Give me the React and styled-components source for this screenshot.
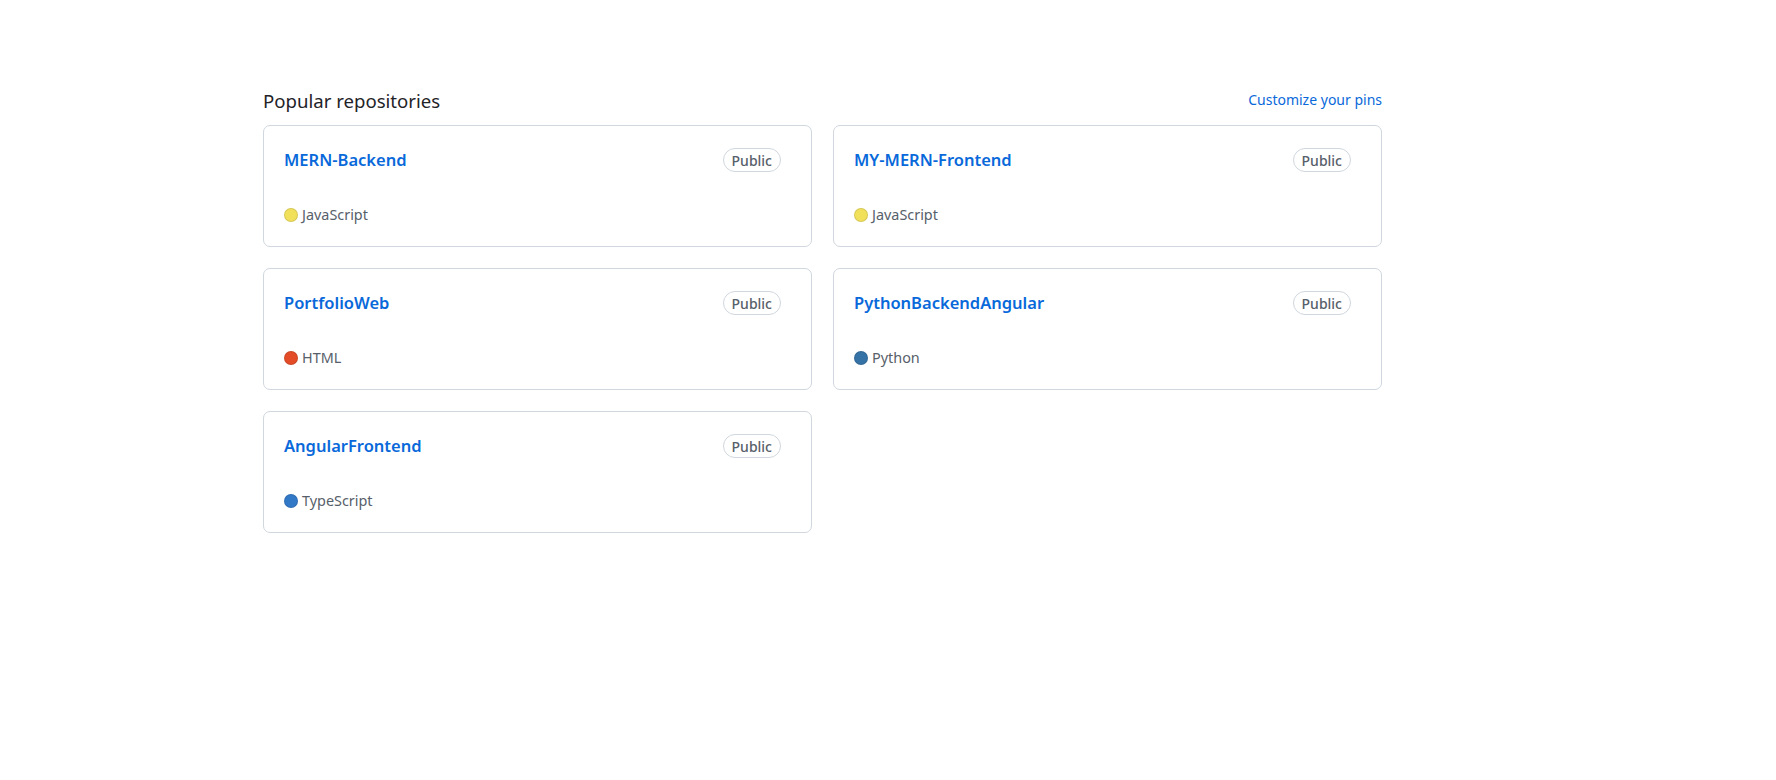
import React from 'react';
import styled, { createGlobalStyle } from 'styled-components';

const GlobalStyle = createGlobalStyle`
  body {
    margin: 0;
    background: #ffffff;
    font-family: "Noto Sans", "Liberation Sans", sans-serif;
    color: #1f2328;
  }
`;

const Page = styled.div`
  padding: 87px 0 0 263px;
`;

const Section = styled.section`
  width: 1119px;
`;

const Header = styled.div`
  display: flex;
  justify-content: space-between;
  align-items: center;
  margin-bottom: 10px;
`;

const Title = styled.h2`
  margin: 0;
  font-size: 18.6px;
  line-height: 28px;
  font-weight: 400;
  color: #1f2328;
`;

const CustomizeLink = styled.a`
  font-size: 14px;
  line-height: 20px;
  margin-bottom: 2px;
  color: #0969da;
  text-decoration: none;
`;

const Grid = styled.ol`
  list-style: none;
  margin: 0;
  padding: 0;
  display: grid;
  grid-template-columns: repeat(2, 1fr);
  column-gap: 21px;
  row-gap: 21px;
`;

const Card = styled.li`
  box-sizing: border-box;
  height: 122px;
  border: 1px solid #d0d7de;
  border-radius: 7px;
  padding: 22px 30px 21px 20px;
  display: flex;
  flex-direction: column;
  justify-content: space-between;
`;

const TopRow = styled.div`
  display: flex;
  align-items: center;
  justify-content: space-between;
`;

const RepoName = styled.a`
  font-size: 16.5px;
  line-height: 24px;
  font-weight: 600;
  color: #0969da;
  text-decoration: none;
`;

const Badge = styled.span`
  box-sizing: border-box;
  display: inline-flex;
  align-items: center;
  height: 24px;
  padding: 0 8px;
  border: 1px solid #d0d7de;
  border-radius: 2em;
  font-size: 14px;
  font-weight: 500;
  color: #57606a;
`;

const Lang = styled.p`
  margin: 0;
  display: flex;
  align-items: center;
  gap: 4px;
  font-size: 14.4px;
  line-height: 20px;
  color: #57606a;
`;

const Dot = styled.span`
  box-sizing: border-box;
  width: 14px;
  height: 14px;
  border-radius: 50%;
  background: ${(p) => p.color};
  border: 1px solid rgba(31, 35, 40, 0.12);
`;

const repos = [
  { name: 'MERN-Backend', lang: 'JavaScript', color: '#f1e05a' },
  { name: 'MY-MERN-Frontend', lang: 'JavaScript', color: '#f1e05a' },
  { name: 'PortfolioWeb', lang: 'HTML', color: '#e34c26' },
  { name: 'PythonBackendAngular', lang: 'Python', color: '#3572A5' },
  { name: 'AngularFrontend', lang: 'TypeScript', color: '#3178c6' },
];

const App = () => {
  return (
    <Page>
      <GlobalStyle />
      <Section>
        <Header>
          <Title>Popular repositories</Title>
          <CustomizeLink href="#">Customize your pins</CustomizeLink>
        </Header>
        <Grid>
          {repos.map((repo) => (
            <Card key={repo.name}>
              <TopRow>
                <RepoName href="#">{repo.name}</RepoName>
                <Badge>Public</Badge>
              </TopRow>
              <Lang>
                <Dot color={repo.color} />
                {repo.lang}
              </Lang>
            </Card>
          ))}
        </Grid>
      </Section>
    </Page>
  );
};

export default App;
